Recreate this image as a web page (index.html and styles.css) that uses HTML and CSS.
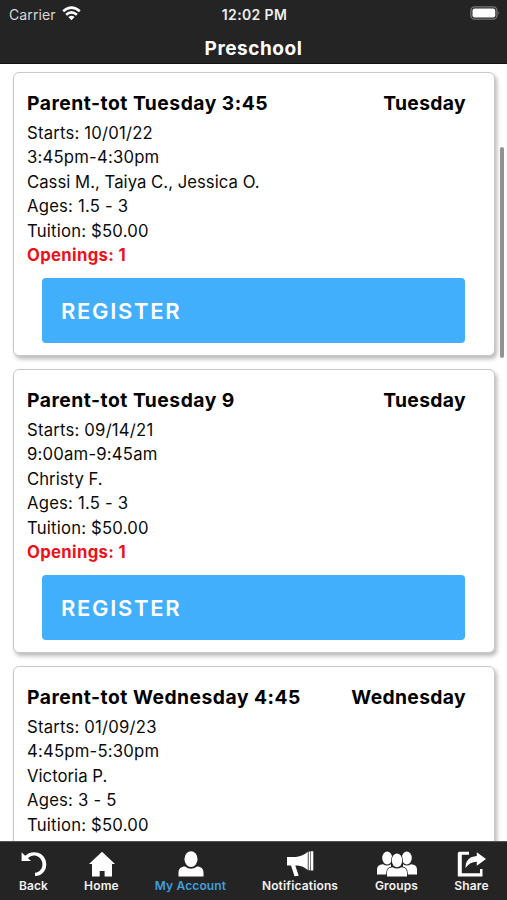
FILE: index.html
```html
<!DOCTYPE html>
<html lang="en">
<head>
<meta charset="utf-8">
<title>Preschool</title>
<link rel="stylesheet" href="styles.css">
</head>
<body>
<div class="app">
  <header class="header">
    <div class="status">
      <div class="carrier"><span>Carrier</span>
        <svg class="wifi" viewBox="0 0 19 15"><g fill="none" stroke="#fff" stroke-width="2.5"><path d="M1.2 5.3Q9.5-2 17.8 5.3"/><path d="M4.1 8.8Q9.5 4 14.9 8.8"/></g><path fill="#fff" d="M6.4 11Q9.5 8.6 12.6 11L9.5 14.2Z"/></svg>
      </div>
      <div class="time">12:02 PM</div>
      <svg class="battery" viewBox="0 0 30 14"><rect x=".9" y=".9" width="26" height="12.2" rx="3.6" fill="none" stroke="#777" stroke-width="1.3"/><rect x="2.5" y="2.5" width="22.8" height="9" rx="2" fill="#fff"/><path d="M28.2 5q1.7 2 0 4z" fill="#777"/></svg>
    </div>
    <h1 class="title">Preschool</h1>
  </header>
  <main class="list">
    <article class="card">
      <div class="heading"><h2 class="name">Parent-tot Tuesday 3:45</h2><h2>Tuesday</h2></div>
      <p>Starts: 10/01/22</p><p>3:45pm-4:30pm</p><p class="staff">Cassi M., Taiya C., Jessica O.</p><p>Ages: 1.5 - 3</p><p>Tuition: $50.00</p><p class="openings">Openings: 1</p>
      <button class="register">REGISTER</button>
    </article>
    <article class="card">
      <div class="heading"><h2 class="name">Parent-tot Tuesday 9</h2><h2>Tuesday</h2></div>
      <p>Starts: 09/14/21</p><p>9:00am-9:45am</p><p class="staff">Christy F.</p><p>Ages: 1.5 - 3</p><p>Tuition: $50.00</p><p class="openings">Openings: 1</p>
      <button class="register">REGISTER</button>
    </article>
    <article class="card">
      <div class="heading"><h2 class="name">Parent-tot Wednesday 4:45</h2><h2>Wednesday</h2></div>
      <p>Starts: 01/09/23</p><p>4:45pm-5:30pm</p><p class="staff">Victoria P.</p><p>Ages: 3 - 5</p><p>Tuition: $50.00</p>
    </article>
    <div class="scrollbar"></div>
  </main>
  <nav class="tabs">
    <a class="tab"><svg width="26" height="26" viewBox="0 0 26 26"><path d="M4.2 4.7C9 .3 16 .2 20.5 3.5C28.5 9.5 26.5 24.5 14 25V21.8C22.5 20.5 23.5 10.5 18 6.3C14.5 3.6 10 4.2 7 7.2L10 10H.6V1.2Z"/></svg><span>Back</span></a>
    <a class="tab"><svg width="26" height="26" viewBox="0 0 26 26"><path d="M13 .7 26 13H23V25.5H15.6V20H10.7V25.5H3V13H0Z"/></svg><span>Home</span></a>
    <a class="tab active"><svg width="26" height="26" viewBox="0 0 26 26"><ellipse cx="13" cy="8.2" rx="6.5" ry="7.9"/><path d="M.5 25.4V22C.5 17.5 3 15.7 7 15.6Q13 20 19 15.6C23 15.7 25.5 17.5 25.5 22V25.4Z"/></svg><span>My Account</span></a>
    <a class="tab"><svg width="28" height="26" viewBox="0 0 28 26"><path d="M1 6H10Q17 5 21.8.8V19Q17 15 11.5 14.6H9.3L12.7 24.7 8.5 25.3 5 14.6H1ZM22.6.5H24V19.3H22.6ZM24.6.3H27.3V19.5H24.6Z"/></svg><span>Notifications</span></a>
    <a class="tab"><svg width="40" height="26" viewBox="0 0 40 26"><ellipse cx="10.2" cy="7" rx="5" ry="6.5"/><ellipse cx="29.8" cy="7" rx="5" ry="6.5"/><path d="M0 23.5V19C0 15 2 13.5 6 13.2Q10 16 14 13.2V23.5ZM40 23.5V19C40 15 38 13.5 34 13.2Q30 16 26 13.2V23.5Z"/><g stroke="#242424" stroke-width="1.6" paint-order="stroke"><path d="M10 25.4V22C10 17.8 12 16.4 15.6 16.2Q20 19 24.4 16.2C28 16.4 30 17.8 30 22V25.4Z"/><ellipse cx="20" cy="9.4" rx="5.2" ry="6.8"/></g></svg><span>Groups</span></a>
    <a class="tab"><svg width="30" height="26" viewBox="0 0 30 26"><path d="M2.5.8H12V3.7H4.8V22.2H23V18H25.5V25.4H.8V2.5Q.8.8 2.5.8ZM19.8 1.2 29 8 19.8 14.7V10.8Q13 10.7 8.5 17Q8.5 5.9 19.8 5Z"/></svg><span>Share</span></a>
  </nav>
</div>
</body>
</html>
```
FILE: styles.css
```css
* { box-sizing: border-box; }
body { margin: 0; font-family: Inter, sans-serif; color: #0b0b0b; background: #fff; }
h1, h2, p { margin: 0; }
.app { width: 507px; height: 900px; display: flex; flex-direction: column; overflow: hidden; }
.header { height: 64px; flex: none; background: #242424; border-bottom: 1px solid #111; color: #fff; }
.status { height: 28px; padding: 0 7px 0 9px; display: grid; grid-template-columns: 1fr auto 1fr; align-items: center; }
.carrier { display: flex; align-items: center; gap: 6px; font-size: 14px; letter-spacing: .1px; color: #d8d8d8; }
.wifi { width: 19px; height: 15px; margin-top: -2px; }
.time { font-size: 14px; font-weight: 600; letter-spacing: .35px; color: #eee; }
.battery { width: 30px; height: 14px; justify-self: end; margin-top: -2px; }
.title { font-size: 19px; line-height: 24px; margin-top: 9px; font-weight: 650; letter-spacing: .55px; text-align: center; }
.list { flex: 1; min-height: 0; overflow: hidden; position: relative; padding: 8px 12px 0 13px; display: flex; flex-direction: column; gap: 13px; }
.card { height: 284px; flex: none; padding: 17px 28px 0 13px; border: 1px solid #c9c9c9; border-radius: 6px; background: #fff; box-shadow: 2px 3px 4px rgba(0,0,0,.28); }
.heading { display: flex; justify-content: space-between; height: 31px; }
h2 { font-size: 19.3px; line-height: 27px; font-weight: 650; letter-spacing: .35px; color: #000; white-space: nowrap; }
.name { letter-spacing: .5px; }
p { font-size: 16.7px; line-height: 24.4px; letter-spacing: .2px; }
.staff { letter-spacing: .03px; }
.openings { color: #ee1118; font-weight: 700; letter-spacing: .35px; }
.register { display: block; width: 423px; height: 65px; margin: 11px 0 0 15px; padding: 0 18px 0 19px; border: 0; border-radius: 4px; background: #41affb; color: #fff; font: 600 22px Inter, sans-serif; letter-spacing: 1.7px; text-align: left; }
.scrollbar { position: absolute; right: 3px; top: 83px; width: 4px; height: 211px; border-radius: 2px; background: #929292; }
.tabs { height: 59px; flex: none; background: #242424; border-top: 1px solid #555; display: grid; grid-template-columns: 67px 69px 109px 110px 83px 67px; }
.tab { display: flex; flex-direction: column; align-items: center; padding-top: 9px; color: #f2f2f2; font-size: 12px; line-height: 16px; font-weight: 600; letter-spacing: .15px; white-space: nowrap; }
.tab svg { fill: #fff; flex: none; }
.tab span { margin-top: 1px; }
.active { color: #419fdf; }
```
